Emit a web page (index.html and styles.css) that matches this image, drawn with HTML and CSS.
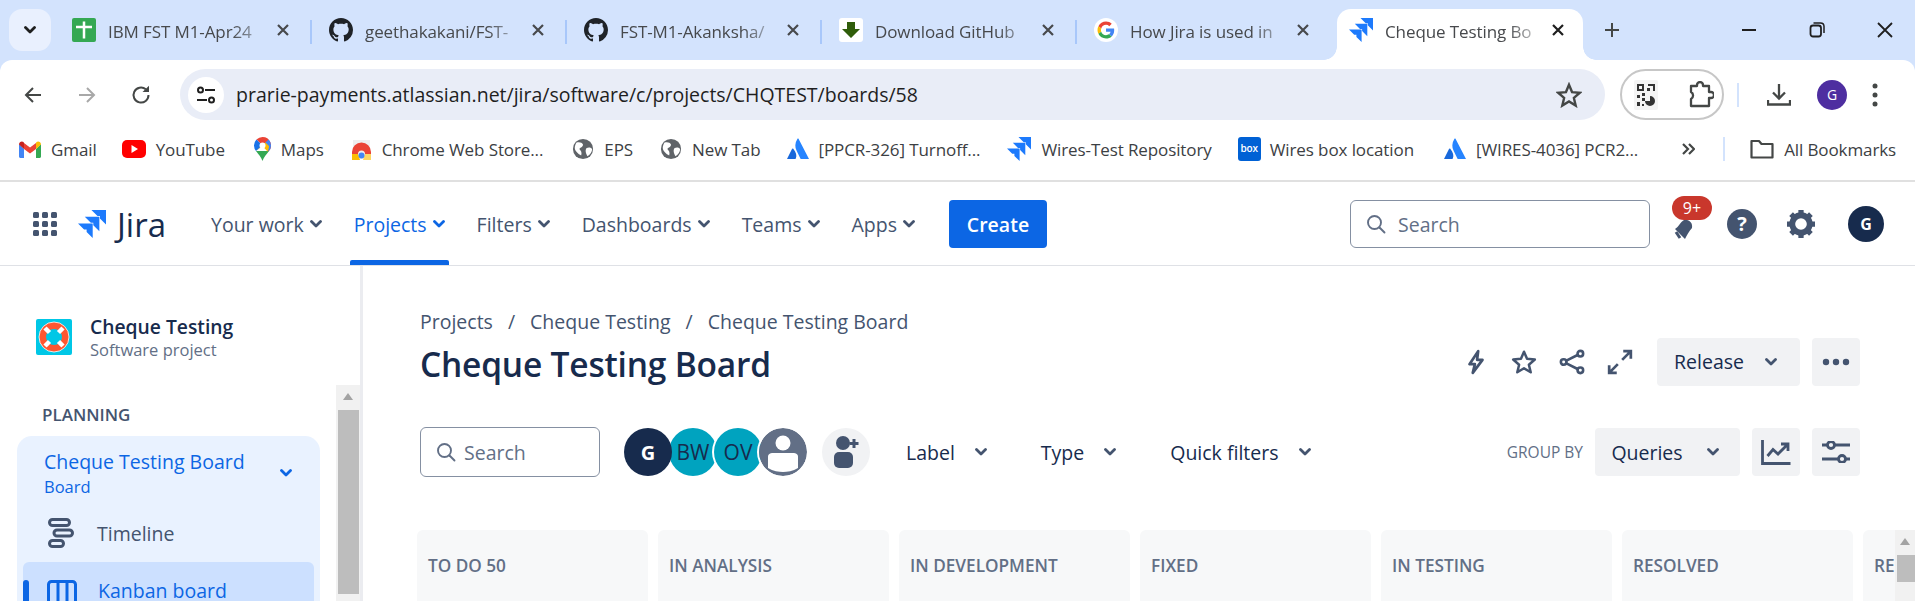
FILE: index.html
```html
<!DOCTYPE html>
<html lang="en">
<head>
    <meta charset="UTF-8">
    <meta name="viewport" content="width=device-width, initial-scale=1.0">
    <title>Cheque Testing Board</title>
    <link rel="stylesheet" href="styles.css">
</head>
<body>
    <svg class="defs" width="0" height="0">
        <symbol id="jira" viewBox="0 0 24 24"><path d="M0 11.5H12.6V24L7.4 18.9V16.7H5.2Z"/><path d="M5.8 5.8H18.3V18.3L13.1 13.1V11H11Z"/><path d="M11.5 0H24V12.5L18.8 7.3V5.2H16.7Z"/></symbol>
        <symbol id="github" viewBox="0 0 16 16"><path d="M8 0C3.58 0 0 3.58 0 8c0 3.54 2.29 6.53 5.47 7.59.4.07.55-.17.55-.38 0-.19-.01-.82-.01-1.49-2.01.37-2.53-.49-2.69-.94-.09-.23-.48-.94-.82-1.13-.28-.15-.68-.52-.01-.53.63-.01 1.08.58 1.23.82.72 1.21 1.87.87 2.33.66.07-.52.28-.87.51-1.07-1.78-.2-3.64-.89-3.64-3.95 0-.87.31-1.59.82-2.15-.08-.2-.36-1.02.08-2.12 0 0 .67-.21 2.2.82.64-.18 1.32-.27 2-.27.68 0 1.36.09 2 .27 1.53-1.04 2.2-.82 2.2-.82.44 1.1.16 1.92.08 2.12.51.56.82 1.27.82 2.15 0 3.07-1.87 3.75-3.65 3.95.29.25.54.73.54 1.48 0 1.07-.01 1.93-.01 2.2 0 .21.15.46.55.38A8.013 8.013 0 0016 8c0-4.42-3.58-8-8-8z"/></symbol>
        <symbol id="close" viewBox="0 0 16 16"><path d="M3 3L13 13M13 3L3 13" fill="none" stroke="currentColor" stroke-width="2.2"/></symbol>
        <symbol id="chevron" viewBox="0 0 12 8"><path d="M1.5 1.5L6 6L10.5 1.5" fill="none" stroke="currentColor" stroke-width="2.8" stroke-linecap="round" stroke-linejoin="round"/></symbol>
        <symbol id="globe" viewBox="0 0 24 24"><circle cx="12" cy="12" r="11" fill="#5f6368"/><path d="M5 5C8 4 11 5 12 7C12 10 9 10 8 12C10 14 11 16 10 19C7 18 3 14 3 11C3 9 4 6 5 5ZM16 11C18 10 20 10 22 12C22 15 20 18 17 20C15 17 14 13 16 11Z" fill="#fff"/></symbol>
        <symbol id="atlassian" viewBox="0 0 24 24"><path d="M7 12C6.5 11.3 5.7 11.4 5.3 12.2L0 23H8.5C9 23 9.4 22.7 9.6 22.3C11 19.300 10 15.500 7 12Z" fill="#1868db"/><path d="M11.300 1C8.500 5.500 8.500 10 10.500 14L14.600 22.300C14.800 22.700 15.200 23 15.700 23H24L12.700 1C12.400 .3 11.700 .3 11.300 1Z" fill="#2684ff"/></symbol>
        <symbol id="search" viewBox="0 0 20 20"><circle cx="8.500" cy="8.500" r="6.500" fill="none" stroke="currentColor" stroke-width="1.900"/><path d="M13.500 13.500L18.500 18.500" stroke="currentColor" stroke-width="1.900" stroke-linecap="round"/></symbol>
    </svg>

    <div class="tabstrip">
        <div class="tab-search"><svg class="chev-sm"><use href="#chevron"/></svg></div>
        <div class="tab tab-first">
            <svg class="favicon" viewBox="0 0 24 24"><rect width="24" height="24" rx="2" fill="#34a853"/><path d="M12 3.500V20.500M4 9H20" stroke="#fff" stroke-width="2.500"/></svg>
            <span class="tab-title">IBM FST M1-Apr24</span>
            <svg class="tab-close"><use href="#close"/></svg>
        </div>
        <div class="tab">
            <svg class="favicon github"><use href="#github"/></svg>
            <span class="tab-title">geethakakani/FST-</span>
            <svg class="tab-close"><use href="#close"/></svg>
        </div>
        <div class="tab">
            <svg class="favicon github"><use href="#github"/></svg>
            <span class="tab-title">FST-M1-Akanksha/</span>
            <svg class="tab-close"><use href="#close"/></svg>
        </div>
        <div class="tab">
            <svg class="favicon" viewBox="0 0 24 24"><rect width="24" height="24" rx="3" fill="#fff"/><path d="M8 4H16V11H21L12 20L3 11H8Z" fill="#2f5d0a"/></svg>
            <span class="tab-title">Download GitHub</span>
            <svg class="tab-close"><use href="#close"/></svg>
        </div>
        <div class="tab tab-last">
            <svg class="favicon" viewBox="0 0 48 48"><circle cx="24" cy="24" r="24" fill="#fff"/><g transform="translate(7 7) scale(.71)"><path fill="#ea4335" d="M24 9.500c3.500 0 6.700 1.200 9.200 3.600l6.900-6.900C35.900 2.400 30.500 0 24 0 14.600 0 6.500 5.400 2.600 13.200l8 6.200C12.400 13.700 17.700 9.500 24 9.500z"/><path fill="#4285f4" d="M47 24.500c0-1.600-.1-3.100-.4-4.500H24v9h12.900c-.6 3-2.200 5.500-4.700 7.200l7.700 6c4.500-4.200 7.100-10.300 7.100-17.700z"/><path fill="#fbbc05" d="M10.500 28.600c-.5-1.400-.8-3-.8-4.600s.3-3.200.8-4.600l-8-6.200C.9 16.500 0 20.100 0 24s.9 7.500 2.600 10.800l7.900-6.200z"/><path fill="#34a853" d="M24 48c6.500 0 11.900-2.100 15.900-5.800l-7.700-6c-2.200 1.400-4.900 2.300-8.200 2.300-6.300 0-11.600-4.200-13.500-9.900l-8 6.200C6.500 42.600 14.600 48 24 48z"/></g></svg>
            <span class="tab-title">How Jira is used in</span>
            <svg class="tab-close"><use href="#close"/></svg>
        </div>
        <div class="tab tab-active">
            <svg class="favicon jira-blue"><use href="#jira"/></svg>
            <span class="tab-title">Cheque Testing Bo</span>
            <svg class="tab-close"><use href="#close"/></svg>
        </div>
        <svg class="new-tab" viewBox="0 0 16 16"><path d="M8 1V15M1 8H15" stroke="#444746" stroke-width="2"/></svg>
        <div class="win-controls">
            <div class="win-btn"><svg width="16" height="16" viewBox="0 0 16 16"><path d="M1 8H15" stroke="#1f1f1f" stroke-width="2"/></svg></div>
            <div class="win-btn"><svg width="16" height="16" viewBox="0 0 16 16"><rect x="1.500" y="3.500" width="10.500" height="11" rx="2.500" fill="none" stroke="#1f1f1f" stroke-width="1.800"/><path d="M4.500 1H11.500C13.500 1 15 2.500 15 4.500V11" fill="none" stroke="#1f1f1f" stroke-width="1.500"/></svg></div>
            <div class="win-btn win-close"><svg width="16" height="16" viewBox="0 0 16 16"><path d="M1 1L15 15M15 1L1 15" stroke="#1f1f1f" stroke-width="1.800"/></svg></div>
        </div>
    </div>

    <div class="toolbar">
        <div class="tool-btn"><svg width="20" height="20" viewBox="0 0 20 20"><path d="M18 10H3M10 3L3 10L10 17" fill="none" stroke="#444746" stroke-width="2"/></svg></div>
        <div class="tool-btn"><svg width="20" height="20" viewBox="0 0 20 20"><path d="M2 10H17M10 3L17 10L10 17" fill="none" stroke="#a8a8a8" stroke-width="2"/></svg></div>
        <div class="tool-btn"><svg width="20" height="20" viewBox="0 0 20 20"><path d="M17.500 10A7.500 7.500 0 1 1 14.800 4.300" fill="none" stroke="#444746" stroke-width="2"/><path d="M11.500 7H18V.8Z" fill="#444746"/></svg></div>
        <div class="address">
            <div class="site-info"><svg width="20" height="20" viewBox="0 0 20 20"><circle cx="4.500" cy="5" r="2.500" fill="none" stroke="#1f1f1f" stroke-width="2"/><path d="M9 5H19M1 15H11" stroke="#1f1f1f" stroke-width="2"/><circle cx="15.500" cy="15" r="2.500" fill="none" stroke="#1f1f1f" stroke-width="2"/></svg></div>
            <span class="url">prarie-payments.atlassian.net/jira/software/c/projects/CHQTEST/boards/58</span>
            <svg class="addr-star" viewBox="0 0 24 24"><path d="M12 2.500L14.800 9.300L22 9.900L16.500 14.700L18.200 21.800L12 18L5.800 21.800L7.500 14.700L2 9.900L9.200 9.300Z" fill="none" stroke="#444746" stroke-width="2.200"/></svg>
        </div>
        <div class="ext-pill">
            <svg width="24" height="30" viewBox="0 0 24 30"><rect width="24" height="30" rx="2" fill="#f4f4f4"/><path d="M3 4H10V11H3ZM5 6V9H8V6ZM14 4H21V11H19V6H14ZM13 8H16V11H13ZM3 15H6V18H3ZM8 13H11V16H8ZM8 18H11V21H8ZM3 22H6V26H3ZM8 24H10V26H8Z" fill="#333"/><path d="M16 16A5 5 0 1 1 11 21H16Z" fill="#333"/></svg>
            <svg width="26" height="28" viewBox="0 0 26 28"><path d="M3 5H9V4A3 3 0 0 1 15 4V5H21V11H23A3 3 0 0 1 23 17H21V25H3V18A4 4 0 0 0 3 11Z" fill="none" stroke="#444746" stroke-width="2.300" stroke-linejoin="round"/></svg>
        </div>
        <div class="tool-sep"></div>
        <svg class="download" viewBox="0 0 24 24"><path d="M12 1V15M6 9.500L12 15.500L18 9.500M1 17V21.500H23V17" fill="none" stroke="#444746" stroke-width="2.300"/></svg>
        <div class="profile">G</div>
        <svg class="kebab" viewBox="0 0 6 24"><circle cx="3" cy="3" r="2.500" fill="#444746"/><circle cx="3" cy="12" r="2.500" fill="#444746"/><circle cx="3" cy="21" r="2.500" fill="#444746"/></svg>
    </div>

    <div class="bookmarks">
        <div class="bm bm-gmail"><svg class="bm-icon" width="22" height="17" viewBox="0 0 22 17"><path d="M0 3V15.500C0 16.300 .7 17 1.500 17H5V8Z" fill="#4285f4"/><path d="M22 3V15.500C22 16.300 21.300 17 20.500 17H17V8Z" fill="#34a853"/><path d="M5 8V2L11 6.500L17 2V8L11 12.500Z" fill="#ea4335"/><path d="M0 3.500C0 1 2.800 -.500 4.500 1L5 2V8Z" fill="#c5221f"/><path d="M22 3.500C22 1 19.200 -.500 17.500 1L17 2V8Z" fill="#fbbc04"/></svg>Gmail</div>
        <div class="bm bm-yt"><svg class="bm-icon" width="24" height="18" viewBox="0 0 24 18"><rect width="24" height="18" rx="5" fill="#f00"/><path d="M9.500 5V13L16 9Z" fill="#fff"/></svg>YouTube</div>
        <div class="bm bm-maps"><svg class="bm-icon" width="17" height="24" viewBox="0 0 17 24"><path d="M8.500 0A8.500 8.500 0 0 1 14.500 14.500L2.500 2.500A8.500 8.500 0 0 1 8.500 0Z" fill="#ea4335"/><path d="M14.500 2.500A8.500 8.500 0 0 1 15 14L8.500 8.500Z" fill="#4285f4"/><path d="M2.500 2.500L8.500 8.500L2 14A8.500 8.500 0 0 1 2.500 2.500Z" fill="#1a73e8"/><path d="M2 14L15 14C12.500 17.500 9.800 20 8.500 24C7.200 20 4.500 17.500 2 14Z" fill="#34a853"/><path d="M2 14L11.500 5.500L15 9C15 11 14.500 12.500 13.500 14.500L8.500 9Z" fill="#fbbc04"/><circle cx="8.500" cy="8.500" r="3" fill="#fff"/></svg>Maps</div>
        <div class="bm bm-store"><svg class="bm-icon" width="21" height="24" viewBox="0 0 21 24"><path d="M2 3H19V22H2Z" fill="#eee"/><path d="M1 15A9.500 9.500 0 0 1 20 15V17H14A3.500 3.500 0 0 0 7 17H1Z" fill="#ea4335"/><path d="M1 17H7L9 23H1Z" fill="#fbbc04"/><path d="M14 17H20V23H12Z" fill="#fdd663"/><circle cx="10.500" cy="18.500" r="3" fill="#4285f4"/></svg>Chrome Web Store...</div>
        <div class="bm bm-eps"><svg class="bm-icon" width="22" height="22"><use href="#globe"/></svg>EPS</div>
        <div class="bm bm-newtab"><svg class="bm-icon" width="22" height="22"><use href="#globe"/></svg>New Tab</div>
        <div class="bm bm-ppcr"><svg class="bm-icon" width="22" height="24"><use href="#atlassian"/></svg>[PPCR-326] Turnoff...</div>
        <div class="bm bm-wires"><svg class="bm-icon jira-blue" width="24" height="24"><use href="#jira"/></svg>Wires-Test Repository</div>
        <div class="bm bm-box"><span class="box-icon">box</span>Wires box location</div>
        <div class="bm bm-wires2"><svg class="bm-icon" width="22" height="24"><use href="#atlassian"/></svg>[WIRES-4036] PCR2...</div>
        <svg class="bm-more" width="14" height="14" viewBox="0 0 14 14"><path d="M2 2L7 7L2 12M8 2L13 7L8 12" fill="none" stroke="#444746" stroke-width="2.200"/></svg>
        <div class="bm-sep"></div>
        <div class="bm bm-all"><svg class="bm-icon" width="24" height="20" viewBox="0 0 24 20"><path d="M1.500 2H9L11.500 5H22.500V18.500H1.500Z" fill="none" stroke="#444746" stroke-width="2.200" stroke-linejoin="round"/></svg>All Bookmarks</div>
    </div>

    <header class="jira-nav">
        <svg class="apps" viewBox="0 0 24 24"><g fill="#44546f"><rect width="6" height="6" rx="1.500"/><rect x="9" width="6" height="6" rx="1.500"/><rect x="18" width="6" height="6" rx="1.500"/><rect y="9" width="6" height="6" rx="1.500"/><rect x="9" y="9" width="6" height="6" rx="1.500"/><rect x="18" y="9" width="6" height="6" rx="1.500"/><rect y="18" width="6" height="6" rx="1.500"/><rect x="9" y="18" width="6" height="6" rx="1.500"/><rect x="18" y="18" width="6" height="6" rx="1.500"/></g></svg>
        <svg class="jira-logo jira-blue"><use href="#jira"/></svg>
        <span class="jira-word">Jira</span>
        <nav class="menu">
            <a class="menu-item">Your work<svg class="chev"><use href="#chevron"/></svg></a>
            <a class="menu-item active">Projects<svg class="chev"><use href="#chevron"/></svg></a>
            <a class="menu-item">Filters<svg class="chev"><use href="#chevron"/></svg></a>
            <a class="menu-item">Dashboards<svg class="chev"><use href="#chevron"/></svg></a>
            <a class="menu-item">Teams<svg class="chev"><use href="#chevron"/></svg></a>
            <a class="menu-item">Apps<svg class="chev"><use href="#chevron"/></svg></a>
        </nav>
        <button class="create">Create</button>
        <div class="search-box top-search"><svg class="search-icon"><use href="#search"/></svg>Search</div>
        <div class="bell">
            <svg width="26" height="24" viewBox="0 0 26 24"><path d="M4 13C8 11 9 6 13 4C18 3 22 7 21 12C18 15 16 19 14 23Z" fill="#44546f"/><path d="M5 16L9 22" stroke="#44546f" stroke-width="3"/></svg>
            <span class="badge">9+</span>
        </div>
        <div class="help">?</div>
        <svg class="gear" viewBox="0 0 24 24"><circle cx="12" cy="12" r="7.500" fill="none" stroke="#44546f" stroke-width="5"/><path d="M12 0V4M12 20V24M0 12H4M20 12H24M3.500 3.500L6.300 6.300M17.700 17.700L20.500 20.500M3.500 20.500L6.300 17.700M17.700 6.300L20.500 3.500" stroke="#44546f" stroke-width="4.500"/></svg>
        <div class="avatar avatar-me nav-avatar">G</div>
    </header>

    <div class="page">
        <aside class="sidebar">
            <div class="project">
                <svg class="project-icon" viewBox="0 0 36 36"><rect width="36" height="36" rx="2" fill="#00c7e6"/><circle cx="18" cy="18" r="11.500" fill="none" stroke="#ff5630" stroke-width="7"/><circle cx="18" cy="18" r="15" fill="none" stroke="#fff" stroke-width=".8"/><path d="M9 9L13.500 13.500M27 9L22.500 13.500M9 27L13.500 22.500M27 27L22.500 22.500" stroke="#fff" stroke-width="4.500"/></svg>
                <div>
                    <div class="project-name">Cheque Testing</div>
                    <div class="project-type">Software project</div>
                </div>
            </div>
            <div class="side-scroll">
                <div class="side-content">
                    <div class="side-heading">PLANNING</div>
                    <div class="side-group">
                        <div class="group-head">
                            <div>
                                <div class="group-title">Cheque Testing Board</div>
                                <div class="group-sub">Board</div>
                            </div>
                            <svg class="chev group-chev"><use href="#chevron"/></svg>
                        </div>
                        <div class="side-item">
                            <svg width="26" height="30" viewBox="0 0 26 30"><g fill="none" stroke="#44546f" stroke-width="3"><rect x="1.500" y="1.500" width="20" height="6" rx="3"/><rect x="6" y="12" width="18.500" height="6" rx="3"/><rect x="1.500" y="22.500" width="14" height="6" rx="3"/></g></svg>
                            Timeline
                        </div>
                        <div class="side-item selected">
                            <svg width="30" height="30" viewBox="0 0 30 30"><g fill="none" stroke="#0c66e4" stroke-width="3"><rect x="1.500" y="1.500" width="27" height="40" rx="3"/><path d="M11 1.500V30M20 1.500V30"/></g></svg>
                            Kanban board
                        </div>
                    </div>
                </div>
                <div class="scrollbar side-bar">
                    <i class="scroll-up"></i>
                    <div class="scroll-thumb"></div>
                </div>
            </div>
        </aside>

        <main class="main">
            <div class="crumbs"><span>Projects</span><span>/</span><span>Cheque Testing</span><span>/</span><span>Cheque Testing Board</span></div>
            <div class="title-row">
                <h1>Cheque Testing Board</h1>
                <div class="actions">
                    <svg class="act" viewBox="0 0 24 24"><path d="M14 2L6 14H11L9 22L18 10H13Z" fill="none" stroke="#44546f" stroke-width="2.500" stroke-linejoin="round"/></svg>
                    <svg class="act" viewBox="0 0 24 24"><path d="M12 2.500L14.800 9L22 9.700L16.500 14.500L18.200 21.500L12 17.800L5.800 21.500L7.500 14.500L2 9.700L9.200 9Z" fill="none" stroke="#44546f" stroke-width="2.300" stroke-linejoin="round"/></svg>
                    <svg class="act" viewBox="0 0 28 28"><g fill="none" stroke="#44546f" stroke-width="2.800"><circle cx="23" cy="5" r="3"/><circle cx="23" cy="23" r="3"/><circle cx="5" cy="14" r="3"/><path d="M8 12.500L20 6.500M8 15.500L20 21.500"/></g></svg>
                    <svg class="act" viewBox="0 0 24 24"><path d="M15 2H22V9M22 2L14 10M9 22H2V15M2 22L10 14" fill="none" stroke="#44546f" stroke-width="2.500"/></svg>
                    <button class="btn btn-release">Release<svg class="chev"><use href="#chevron"/></svg></button>
                    <button class="btn btn-icon"><svg width="28" height="8" viewBox="0 0 28 8"><circle cx="4" cy="4" r="3.200" fill="#44546f"/><circle cx="14" cy="4" r="3.200" fill="#44546f"/><circle cx="24" cy="4" r="3.200" fill="#44546f"/></svg></button>
                </div>
            </div>
            <div class="filter-row">
                <div class="search-box board-search"><svg class="search-icon"><use href="#search"/></svg>Search</div>
                <div class="avatars">
                    <div class="avatar avatar-me">G</div>
                    <div class="avatar avatar-teal">BW</div>
                    <div class="avatar avatar-teal">OV</div>
                    <svg class="avatar avatar-blank" viewBox="0 0 48 48"><circle cx="24" cy="24" r="24" fill="#626f86"/><circle cx="24" cy="15" r="7.500" fill="#fff"/><path d="M9 29C9 26 11 25 14 25H34C37 25 39 26 39 29V40C34 43 28 44 24 44C20 44 14 43 9 40Z" fill="#fff"/></svg>
                </div>
                <div class="add-user"><svg width="26" height="34" viewBox="0 0 26 34"><circle cx="10" cy="8" r="7" fill="#44546f"/><rect x="1" y="17" width="19" height="16" rx="5" fill="#44546f"/><path d="M21 4V13M16.500 8.500H25.500" stroke="#44546f" stroke-width="3"/></svg></div>
                <div class="filter f-label">Label<svg class="chev"><use href="#chevron"/></svg></div>
                <div class="filter f-type">Type<svg class="chev"><use href="#chevron"/></svg></div>
                <div class="filter f-quick">Quick filters<svg class="chev"><use href="#chevron"/></svg></div>
                <span class="group-by">GROUP BY</span>
                <button class="btn btn-queries">Queries<svg class="chev"><use href="#chevron"/></svg></button>
                <button class="btn btn-icon"><svg width="30" height="26" viewBox="0 0 30 26"><path d="M1.500 1V24.500H29.500" fill="none" stroke="#44546f" stroke-width="2.800"/><path d="M6.500 17L12 10.500L17 15L26 6M20 5H27V12" fill="none" stroke="#44546f" stroke-width="2.800"/></svg></button>
                <button class="btn btn-icon"><svg width="28" height="22" viewBox="0 0 28 22"><g fill="none" stroke="#44546f" stroke-width="2.800"><path d="M0 4H5M13 4H28M0 18H16M24 18H28"/><circle cx="9" cy="4" r="3.500"/><circle cx="20" cy="18" r="3.500"/></g></svg></button>
            </div>
            <div class="board">
                <div class="column">TO DO 50</div>
                <div class="column">IN ANALYSIS</div>
                <div class="column">IN DEVELOPMENT</div>
                <div class="column">FIXED</div>
                <div class="column">IN TESTING</div>
                <div class="column">RESOLVED</div>
                <div class="column">RE</div>
            </div>
            <div class="scrollbar page-bar">
                <i class="scroll-up"></i>
                <div class="scroll-thumb"></div>
            </div>
        </main>
    </div>
</body>
</html>
```

FILE: styles.css
```css
* {
    box-sizing: border-box;
}
html, body {
    margin: 0;
    height: 601px;
    overflow: hidden;
}
body {
    font-family: "Open Sans", "Noto Sans", sans-serif;
    background: #d3e3fd;
    color: #172b4d;
    width: 1915px;
}
.defs {
    display: block;
    height: 0;
}
button {
    font: inherit;
    border: none;
}

/* browser tabs */
.tabstrip {
    display: flex;
    height: 60px;
    padding-top: 9px;
    align-items: flex-start;
}
.tab-search {
    width: 42px;
    height: 42px;
    margin: 0 9px;
    border-radius: 13px;
    background: #e9f0fe;
    display: flex;
    align-items: center;
    justify-content: center;
}
.chev-sm {
    width: 12px;
    height: 8px;
    color: #1f1f1f;
}
.tab {
    position: relative;
    width: 255px;
    height: 51px;
    padding: 0 26px 9px 12px;
    display: flex;
    align-items: center;
}
.tab::after {
    content: "";
    position: absolute;
    right: 5px;
    top: 11px;
    width: 2px;
    height: 24px;
    background: #a8c7fa;
}
.tab-first {
    width: 257px;
}
.tab-last::after {
    display: none;
}
.tab-active {
    width: 246px;
    padding-right: 17px;
    background: white;
    border-radius: 14px 14px 0 0;
}
.tab-active::before,
.tab-active::after {
    content: "";
    position: absolute;
    top: auto;
    bottom: 0;
    width: 13px;
    height: 13px;
}
.tab-active::before {
    left: -13px;
    background: radial-gradient(circle at 0 0, transparent 12.5px, white 13px);
}
.tab-active::after {
    right: -13px;
    background: radial-gradient(circle at 100% 0, transparent 12.5px, white 13px);
}
.favicon {
    width: 24px;
    height: 24px;
    flex: none;
}
.github {
    fill: #1f2328;
}
.jira-blue {
    fill: #1d7afc;
}
.tab-title {
    flex: 1;
    min-width: 0;
    margin: 2px 8px 0 12px;
    font-size: 17px;
    letter-spacing: -0.1px;
    color: #47494c;
    white-space: nowrap;
    -webkit-mask-image: linear-gradient(to right, black 78%, rgba(0, 0, 0, 0.15) 100%);
    mask-image: linear-gradient(to right, black 78%, rgba(0, 0, 0, 0.15) 100%);
}
.tab-close {
    width: 16px;
    height: 16px;
    flex: none;
    color: #47494c;
}
.tab-active .tab-close {
    color: #1f1f1f;
}
.new-tab {
    width: 16px;
    height: 16px;
    margin: 13px 0 0 21px;
}
.win-controls {
    display: flex;
    margin-left: auto;
    margin-right: -4px;
    height: 42px;
}
.win-btn {
    width: 68px;
    display: flex;
    align-items: center;
    justify-content: center;
}

/* browser toolbar */
.toolbar {
    height: 60px;
    padding: 9px 0 0 6px;
    background: white;
    display: flex;
    border-radius: 12px 12px 0 0;
    align-items: center;
}
.tool-btn {
    width: 54px;
    display: flex;
    justify-content: center;
}
.address {
    width: 1425px;
    height: 51px;
    margin-left: 12px;
    padding: 0 23px 0 8px;
    border-radius: 26px;
    background: #e9edf7;
    display: flex;
    align-items: center;
}
.site-info {
    width: 36px;
    height: 36px;
    border-radius: 50%;
    background: white;
    display: flex;
    align-items: center;
    justify-content: center;
}
.url {
    margin-left: 12px;
    font-size: 19.5px;
    color: #1f1f1f;
    flex: 1;
}
.addr-star {
    width: 26px;
    height: 26px;
}
.ext-pill {
    width: 104px;
    height: 51px;
    margin-left: 15px;
    border: 2px solid #c7c7c7;
    border-radius: 26px;
    display: flex;
    align-items: center;
    padding-left: 12px;
    gap: 30px;
}
.tool-sep {
    width: 2px;
    height: 24px;
    margin-left: 13px;
    background: #d3e3fd;
}
.download {
    width: 24px;
    height: 24px;
    margin-left: 28px;
}
.profile {
    width: 30px;
    height: 30px;
    margin-left: 26px;
    border-radius: 50%;
    background: #4e2ea0;
    color: white;
    font-size: 14px;
    display: flex;
    align-items: center;
    justify-content: center;
}
.kebab {
    width: 6px;
    height: 24px;
    margin-left: 25px;
}

/* bookmarks */
.bookmarks {
    height: 62px;
    padding: 0 0 2px 19px;
    display: flex;
    align-items: center;
    background: white;
    border-bottom: 2px solid #e0e0e0;
    font-size: 17px;
    letter-spacing: -0.1px;
    color: #3c4043;
}
.bm {
    display: flex;
    align-items: center;
    white-space: nowrap;
}
.bm-icon {
    margin-right: 10px;
    flex: none;
}
.bm-yt { margin-left: 25px; }
.bm-maps { margin-left: 29px; }
.bm-store { margin-left: 27px; }
.bm-eps { margin-left: 29px; }
.bm-newtab { margin-left: 27px; }
.bm-ppcr { margin-left: 26px; }
.bm-wires { margin-left: 27px; }
.bm-box { margin-left: 26px; }
.bm-wires2 { margin-left: 30px; }
.box-icon {
    width: 23px;
    height: 24px;
    margin-right: 9px;
    border-radius: 3px;
    background: #0061d5;
    color: white;
    font-size: 10px;
    font-weight: 600;
    text-align: center;
    line-height: 23px;
}
.bm-more {
    margin-left: 43px;
}
.bm-sep {
    width: 2px;
    height: 24px;
    margin-left: 28px;
    background: #d3e3fd;
}
.bm-all {
    margin-left: 25px;
}

/* jira top nav */
.jira-nav {
    position: relative;
    height: 84px;
    padding: 1px 0 0 33px;
    display: flex;
    align-items: center;
    background: white;
    border-bottom: 1px solid #dfe1e6;
}
.apps {
    width: 24px;
    height: 24px;
    flex: none;
}
.jira-logo {
    width: 28px;
    height: 28px;
    margin-left: 21px;
}
.jira-word {
    margin-left: 11px;
    font-size: 33px;
    color: #172b4d;
    line-height: 1;
}
.menu {
    display: flex;
    height: 82px;
    margin-left: 41px;
    gap: 24px;
}
.menu-item {
    position: relative;
    padding: 0 4px;
    display: flex;
    align-items: center;
    gap: 6px;
    font-size: 19.5px;
    color: #44546f;
}
.menu-item.active {
    color: #0c66e4;
}
.menu-item.active::after {
    content: "";
    position: absolute;
    left: 0;
    right: 0;
    bottom: 0;
    height: 5px;
    border-radius: 2px 2px 0 0;
    background: #0c66e4;
}
.chev {
    width: 12px;
    height: 8px;
    flex: none;
    color: #44546f;
}
.menu-item.active .chev {
    color: #0c66e4;
}
.create {
    width: 98px;
    height: 48px;
    margin-left: 30px;
    border-radius: 4px;
    background: #0c66e4;
    color: white;
    font-size: 19.5px;
    font-weight: 600;
}
.search-box {
    height: 48px;
    padding-left: 15px;
    border: 1.5px solid #8590a2;
    border-radius: 6px;
    display: flex;
    align-items: center;
    gap: 12px;
    font-size: 19.5px;
    color: #626f86;
}
.search-icon {
    width: 20px;
    height: 20px;
    color: #626f86;
}
.top-search {
    width: 300px;
    margin-left: auto;
}
.bell {
    position: relative;
    width: 26px;
    height: 24px;
    margin: 8px 0 0 21px;
}
.badge {
    position: absolute;
    left: 1px;
    top: -20px;
    width: 40px;
    height: 24px;
    border-radius: 12px;
    background: #c9372c;
    color: white;
    font-size: 16px;
    text-align: center;
    line-height: 24px;
}
.help {
    width: 30px;
    height: 30px;
    margin-left: 30px;
    border-radius: 50%;
    background: #44546f;
    color: white;
    font-size: 20px;
    font-weight: 700;
    text-align: center;
    line-height: 30px;
}
.gear {
    width: 28px;
    height: 28px;
    margin-left: 30px;
}

/* page */
.page {
    display: flex;
    height: 335px;
    background: white;
}
.sidebar {
    width: 363px;
    flex: none;
    border-right: 3px solid #ebecf0;
}
.project {
    height: 119px;
    padding: 53px 0 0 36px;
    display: flex;
    gap: 18px;
}
.project-icon {
    width: 36px;
    height: 36px;
    flex: none;
}
.project-name {
    margin-top: -5px;
    font-size: 19.3px;
    font-weight: 600;
    line-height: 26px;
}
.project-type {
    font-size: 16.5px;
    line-height: 20px;
    color: #626f86;
}
.side-scroll {
    display: flex;
    height: 216px;
}
.side-content {
    width: 336px;
    padding-left: 17px;
}
.side-heading {
    height: 51px;
    padding: 17px 0 0 25px;
    font-size: 17px;
    font-weight: 600;
    line-height: 26px;
    color: #44546f;
}
.side-group {
    width: 303px;
    height: 165px;
    padding: 3px 6px 0;
    overflow: hidden;
    border-radius: 15px 15px 0 0;
    background: #e9f2ff;
}
.group-head {
    height: 68px;
    padding: 0 22px 0 21px;
    display: flex;
    align-items: center;
    justify-content: space-between;
    color: #0c66e4;
}
.group-title {
    font-size: 19.5px;
    line-height: 27px;
}
.group-sub {
    font-size: 16.5px;
    line-height: 24px;
}
.group-chev {
    color: #0c66e4;
}
.side-item {
    height: 52px;
    padding-left: 25px;
    display: flex;
    align-items: center;
    gap: 23px;
    font-size: 19.5px;
    color: #44546f;
}
.side-item svg {
    flex: none;
}
.side-item.selected {
    position: relative;
    height: 39px;
    margin-top: 3px;
    padding: 18px 0 0 24px;
    align-items: flex-start;
    overflow: hidden;
    border-radius: 6px 6px 0 0;
    background: #cce0ff;
    color: #0c66e4;
    gap: 21px;
    line-height: 21px;
}
.side-item.selected::before {
    content: "";
    position: absolute;
    left: 0;
    top: 18px;
    width: 6px;
    height: 40px;
    border-radius: 3px 3px 0 0;
    background: #0c66e4;
}
.scrollbar {
    width: 24px;
    background: #f1f1f1;
    display: flex;
    flex-direction: column;
    align-items: center;
}
.scroll-up {
    display: block;
    width: 0;
    height: 0;
    margin-top: 8px;
    border: 5px solid transparent;
    border-top: 0;
    border-bottom: 7px solid #a3a3a3;
}
.scroll-thumb {
    margin-top: 10px;
    width: 21px;
    height: 184px;
    background: #bdbdbd;
}

/* main column */
.main {
    position: relative;
    flex: 1;
    padding: 42px 0 0 57px;
    min-width: 0;
}
.crumbs {
    display: flex;
    gap: 15px;
    font-size: 19.5px;
    line-height: 28px;
    color: #44546f;
}
.title-row {
    height: 57px;
    display: flex;
    align-items: center;
    padding-right: 55px;
    justify-content: space-between;
}
h1 {
    margin: -2px 0 0;
    font-size: 33.5px;
    font-weight: 600;
    letter-spacing: -0.2px;
    color: #172b4d;
}
.actions {
    display: flex;
    align-items: center;
    margin-top: -6px;
}
.act {
    width: 26px;
    height: 26px;
    margin-right: 22px;
}
.btn {
    height: 48px;
    border-radius: 4px;
    background: #f1f2f4;
    display: flex;
    align-items: center;
    justify-content: center;
    color: #172b4d;
    font-size: 19.5px;
}
.btn-release {
    width: 143px;
    margin-left: 2px;
    padding: 0 6px 0 0;
    gap: 21px;
}
.btn-icon {
    width: 48px;
    margin-left: 12px;
    padding: 0;
}
.filter-row {
    height: 50px;
    margin-top: 34px;
    display: flex;
    align-items: center;
    padding-right: 55px;
}
.board-search {
    width: 180px;
    height: 50px;
    gap: 8px;
}
.avatars {
    display: flex;
    margin-left: 24px;
}
.avatar {
    width: 48px;
    height: 48px;
    border-radius: 50%;
    flex: none;
    display: flex;
    align-items: center;
    justify-content: center;
    font-size: 20px;
    font-weight: 700;
}
.avatars .avatar + .avatar {
    margin-left: -3px;
    box-shadow: -2px 0 0 white;
}
.avatar-me {
    position: relative;
    z-index: 1;
    background: #172b4d;
    color: white;
}
.avatar-teal {
    background: #00a3bf;
    color: #172b4d;
    font-size: 21px;
    font-weight: 500;
}
.nav-avatar {
    width: 36px;
    height: 36px;
    margin: 0 31px 0 33px;
    font-size: 16px;
}
.add-user {
    width: 48px;
    height: 48px;
    margin-left: 15px;
    border-radius: 50%;
    background: #f1f2f4;
    display: flex;
    align-items: center;
    justify-content: center;
}
.filter {
    display: flex;
    align-items: center;
    gap: 20px;
    font-size: 19.5px;
    color: #172b4d;
}
.f-label { margin-left: 36px; }
.f-type { margin-left: 54px; }
.f-quick { margin-left: 54px; }
.group-by {
    margin-left: auto;
    font-size: 15.5px;
    color: #626f86;
}
.btn-queries {
    width: 145px;
    margin-left: 12px;
    padding: 0 5px 0 0;
    gap: 24px;
}
.board {
    display: flex;
    gap: 10px;
    height: 71px;
    margin: 53px 0 0 -3px;
    overflow: hidden;
}
.column {
    width: 231px;
    flex: none;
    padding: 26px 0 0 11px;
    border-radius: 6px 6px 0 0;
    background: #f7f8f9;
    font-size: 17.2px;
    font-weight: 600;
    line-height: 20px;
    color: #626f86;
}
.page-bar {
    position: absolute;
    right: 0;
    top: 264px;
    width: 20px;
    height: 71px;
}
.page-bar .scroll-thumb {
    width: 18px;
    height: 27px;
    margin-left: 2px;
}
```
